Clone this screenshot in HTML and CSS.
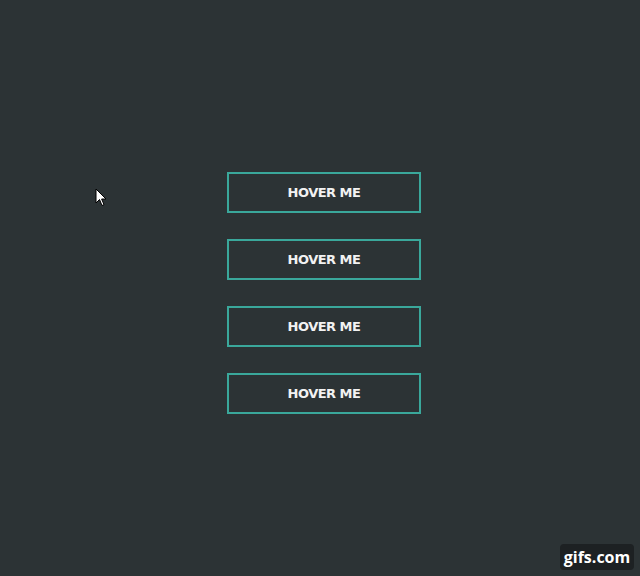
FILE: index.html
```html
<!DOCTYPE html>
<html>
<head>
<meta charset="utf-8">
<link rel="stylesheet" href="styles.css">
</head>
<body>
<main class="stage">
  <button class="btn">HOVER ME</button>
  <button class="btn">HOVER ME</button>
  <button class="btn">HOVER ME</button>
  <button class="btn">HOVER ME</button>
</main>
<svg class="cursor" width="12" height="19" viewBox="0 0 12 19">
  <path d="M1 1 L1 15 L4.5 11.5 L7 17.5 L9 16.6 L6.6 11 L11 11 Z" fill="#fff" stroke="#000" stroke-width="1"/>
</svg>
<div class="badge">gifs.com</div>
</body>
</html>
```
FILE: styles.css
```css
html, body {
  margin: 0;
  height: 100%;
  background: #2c3335;
}
body {
  position: relative;
  overflow: hidden;
}
.stage {
  display: flex;
  flex-direction: column;
  align-items: center;
  gap: 26px;
  padding-top: 172px;
  padding-left: 8px;
}
.btn {
  width: 194px;
  height: 41px;
  box-sizing: border-box;
  border: 2px solid #3aa89b;
  background: transparent;
  color: #f2f2f2;
  font-family: "DejaVu Sans", sans-serif;
  font-weight: bold;
  font-size: 13px;
  letter-spacing: -0.5px;
  padding: 0;
  display: flex;
  align-items: center;
  justify-content: center;
}
.cursor {
  position: absolute;
  left: 95px;
  top: 188px;
}
.badge {
  position: absolute;
  left: 560px;
  top: 544px;
  width: 74px;
  height: 26px;
  border-radius: 4px;
  background: #1d2123;
  color: #fff;
  font-family: "Open Sans", sans-serif;
  font-weight: bold;
  font-size: 16px;
  display: flex;
  align-items: center;
  justify-content: center;
  line-height: 1;
}
```
